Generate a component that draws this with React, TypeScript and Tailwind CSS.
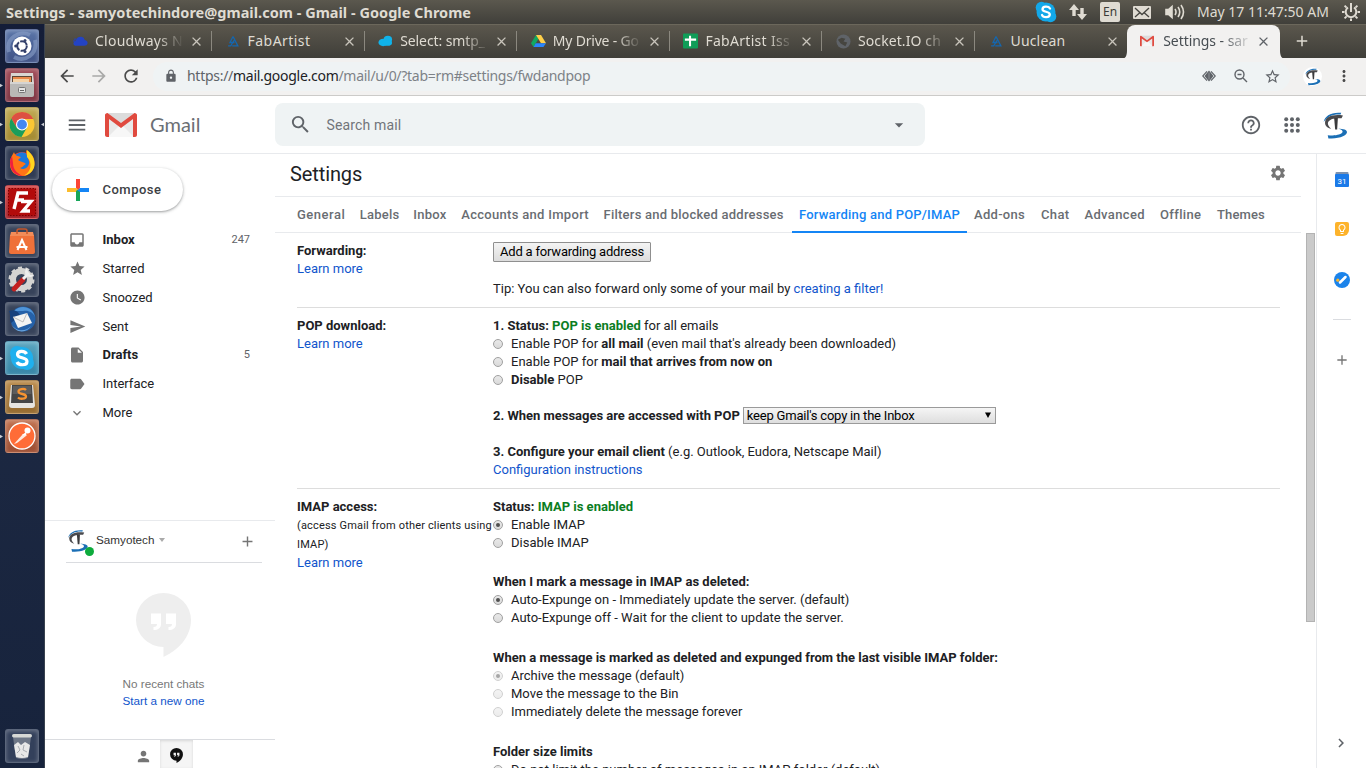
import type { ReactNode } from "react";
import {
  MdMenu, MdSearch, MdArrowDropDown, MdHelpOutline, MdInbox, MdStar, MdWatchLater, MdSend,
  MdInsertDriveFile, MdLabel, MdExpandMore, MdPerson, MdSettings, MdArrowBack, MdArrowForward,
  MdRefresh, MdLock, MdStarBorder, MdMoreVert, MdAdd, MdChevronRight, MdClose, MdLightbulbOutline,
} from "react-icons/md";

/* ---------- logos ---------- */

function SamyotechLogo({ className }: { className: string }) {
  return (
    <svg viewBox="0 0 80 88" className={className} aria-hidden="true">
      <path d="M5 35C8 17 28 5 57 8L55 13C34 11 16 18 5 35Z" fill="#1b6fb5" />
      <path d="M62 16C34 11 9 19 9 37C9 47 17 53 27 55C19 48 16 42 18 36C23 25 39 23 58 24Z" fill="#4a4a4d" />
      <path d="M36 23H47L45 57H39Z" fill="#3b3b3d" />
      <path d="M48 55C63 55 75 58 74 66C71 79 45 84 19 84L17 74C38 77 57 73 61 65C62 60 57 57 48 55Z" fill="#1b6fb5" />
    </svg>
  );
}

function GmailLogo({ className }: { className: string }) {
  return (
    <svg viewBox="0 0 32 24" className={className} aria-hidden="true">
      <path d="M2 0H30V24H2Z" fill="#e9e9e9" />
      <path d="M3 24L16 11L29 24Z" fill="#f7f7f7" />
      <path d="M4 1L16 11L28 1V0H4Z" fill="#dcdcdc" />
      <path d="M0 2C0 1 1 0 2.500 0L16 10L29.500 0C31 0 32 1 32 2V22C32 23 31 24 30 24H28V6L16 15L4 6V24H2C1 24 0 23 0 22Z" fill="#e04a3f" />
    </svg>
  );
}

function HangoutsLogo({ className, quote }: { className: string; quote: string }) {
  return (
    <svg viewBox="0 0 55 64" className={className} aria-hidden="true">
      <path d="M27.500 0A27.500 27 0 0 0 27.500 54V64C43 57 55 43 55 27A27.500 27 0 0 0 27.500 0Z" fill="currentColor" />
      <path d="M15 20.500H25V31C25 35 22 37 17.500 37V34C20 34 21 33 21 31H15ZM30 20.500H40V31C40 35 37 37 32.500 37V34C35 34 36 33 36 31H30Z" fill={quote} />
    </svg>
  );
}

/* ---------- desktop panel ---------- */

function TopPanel() {
  return (
    <header className="flex h-6 shrink-0 items-center justify-between bg-linear-to-b from-[#5b584e] to-[#403f3a] px-1.5 text-[#dfdbd2]">
      <div className="text-[14.5px] leading-6 font-bold tracking-[0.02px] whitespace-nowrap">
        Settings - samyotechindore@gmail.com - Gmail - Google Chrome
      </div>
      <div className="flex items-center">
        <svg viewBox="0 0 22 22" className="mr-3 h-[22px] w-[22px]">
          <circle cx="11" cy="11" r="9.500" fill="#13a8e9" />
          <circle cx="6.500" cy="6.500" r="5.800" fill="#13a8e9" />
          <circle cx="15.500" cy="15.500" r="5.800" fill="#13a8e9" />
          <path d="M15 7.500C13.500 5 7.500 5 7.500 8.200C7.500 11.500 14.800 10 14.800 13.500C14.800 17 8 17 7 14" fill="none" stroke="#fff" strokeWidth="2.300" strokeLinecap="round" />
        </svg>
        <svg viewBox="0 0 18 16" className="mr-[13px] h-4 w-[18px]" fill="#dfdbd2">
          <path d="M5 0L10 6H6.700V12H3.300V6H0ZM13 16L8 10H11.300V4H14.700V10H18Z" />
        </svg>
        <div className="mr-[13px] flex h-5 w-5 items-center justify-center rounded-xs bg-[#dfdbd2] text-[12px] text-[#3c3b37]">En</div>
        <svg viewBox="0 0 18 13" className="mr-3.5 h-[13px] w-[18px]">
          <rect width="18" height="13" rx="1" fill="#dfdbd2" />
          <path d="M2 2L9 8.500L16 2M2 11L6.500 7M16 11L11.500 7" fill="none" stroke="#45443f" strokeWidth="1.300" />
        </svg>
        <svg viewBox="0 0 20 18" className="mr-3 h-[18px] w-5" fill="none" stroke="#dfdbd2" strokeWidth="1.600">
          <path d="M1 6.500H3.500L7 3.500V14.500L3.500 11.500H1Z" fill="#dfdbd2" />
          <path d="M10 6Q12 9 10 12M13 4Q16.500 9 13 14M16 2Q21 9 16 16" />
        </svg>
        <div className="mr-[13px] w-[132px] text-sm leading-6 whitespace-nowrap">May 17 11:47:50 AM</div>
        <svg viewBox="0 0 18 18" className="h-[18px] w-[18px]" fill="none" stroke="#dfdbd2">
          <path d="M6 4.500A5.300 5.300 0 1 0 12 4.500M9 2V9" strokeWidth="2" />
          <path d="M9 0V2M9 15.500V18M0 9H2.500M15.500 9H18M2.600 2.600L4.600 4.600M13.400 13.400L15.400 15.400M2.600 15.400L4.600 13.400M13.400 4.600L15.400 2.600" strokeWidth="2" />
        </svg>
      </div>
    </header>
  );
}

/* ---------- launcher ---------- */

function LauncherTile({ tint, arrow, active, children }: { tint: string; arrow?: boolean; active?: boolean; children: ReactNode }) {
  return (
    <div className="flex h-[34px] w-full items-center justify-between">
      <span className="w-[5px] text-[#c9ccd3]">
        {arrow && <svg viewBox="0 0 5 8" className="h-[7px] w-[3px]"><path d="M0 1L5 4L0 7Z" fill="currentColor" /></svg>}
      </span>
      <span className={`flex h-[34px] w-[34px] items-center justify-center rounded-[3px] border border-white/20 shadow-[inset_0_1px_4px_rgba(255,255,255,0.3)] ${tint}`}>
        <svg viewBox="0 0 32 32" className="h-8 w-8" aria-hidden="true">{children}</svg>
      </span>
      <span className="flex w-[5px] justify-end text-[#c9ccd3]">
        {active && <svg viewBox="0 0 5 8" className="h-[7px] w-[3px]"><path d="M5 1L0 4L5 7Z" fill="currentColor" /></svg>}
      </span>
    </div>
  );
}

function Launcher() {
  return (
    <aside className="flex w-[45px] shrink-0 flex-col justify-between border-r border-[#39424f] bg-linear-to-b from-[#141d38] via-[#1c2842] to-[#17233c] pt-[5px] pb-[5px]">
      <div className="flex flex-col gap-[5px]">
        <LauncherTile tint="bg-linear-to-b from-[#5a75a8] to-[#3f5286]">
          <path d="M3 22C-1 8 14 0 24 5M29 10C32 24 19 33 8 27" stroke="#8aa0c8" strokeWidth="4" fill="none" opacity=".6" />
          <circle cx="16" cy="16" r="9.500" fill="#fff" />
          <circle cx="16" cy="16" r="4.800" fill="none" stroke="#33406b" strokeWidth="2" strokeDasharray="8.800 1.250" />
          <circle cx="9.700" cy="16" r="1.500" fill="#33406b" />
          <circle cx="19" cy="10.500" r="1.500" fill="#33406b" />
          <circle cx="19" cy="21.500" r="1.500" fill="#33406b" />
        </LauncherTile>
        <LauncherTile arrow tint="bg-linear-to-b from-[#a04a57] to-[#7d3341]">
          <path d="M5 4H27L28 14H4Z" fill="#d9d6d2" />
          <path d="M6 7H26V14H6Z" fill="#5b4636" />
          <path d="M7 8H25V14H7Z" fill="#e8884a" />
          <path d="M7 10H23V14H7Z" fill="#f5d3a6" />
          <path d="M4 13H28V26Q28 28 26 28H6Q4 28 4 26Z" fill="#b9b8b6" />
          <path d="M4 13H28V15H4Z" fill="#d5d4d2" />
          <rect x="12.500" y="18.500" width="7" height="5" rx="1" fill="#e5e5e5" stroke="#777" />
          <path d="M14 21.500H18" stroke="#666" />
        </LauncherTile>
        <LauncherTile arrow active tint="bg-linear-to-b from-[#c0ab55] to-[#a3892f]">
          <circle cx="16" cy="16.500" r="12.500" fill="#fbc734" />
          <path d="M16 4A12.500 12.500 0 0 0 5.200 10.200L10.600 19.600L16 11H27.300A12.500 12.500 0 0 0 16 4Z" fill="#dd4f42" />
          <path d="M5.200 10.200A12.500 12.500 0 0 0 15.500 29L21 19.500L16 22A6 6 0 0 1 10.600 19.600Z" fill="#1a9d5b" />
          <circle cx="16" cy="16.500" r="6" fill="#fff" />
          <circle cx="16" cy="16.500" r="4.900" fill="#4387f2" />
        </LauncherTile>
        <LauncherTile tint="bg-[#303c54]">
          <circle cx="16" cy="17" r="12" fill="#f4402e" />
          <circle cx="16" cy="14" r="8.800" fill="#1b78dd" />
          <path d="M8 5C9 9 12 9 15 10L12 13C15 15 18 15 20 17C17 18 18 20 14 21C19 24 24 19 23 14C22 10 20 9 20 3C25 6 29 10 28.500 17C28 25 22 29 16 29C9 29 4 24 4 17C4 11 6 9 8 5Z" fill="#ff7417" />
          <path d="M21 3C25 6 29 11 28.500 18C28 24 23 28 18 28.500C25 25 27 16 21 10Z" fill="#ffd51f" />
          <path d="M4 15C4 24 10 29 17 29C12 27 7 23 7 16L6 9Q4 12 4 15Z" fill="#f0203f" />
        </LauncherTile>
        <LauncherTile arrow tint="bg-linear-to-b from-[#d13c3c] to-[#a01620]">
          <rect x="2.500" y="2.500" width="27" height="27" fill="#b20b0b" stroke="#7a0000" strokeDasharray="1.500 1.500" />
          <path d="M8 23L12 7H22M10.500 14H18M15 15.500H25L17 25H24" fill="none" stroke="#fff" strokeWidth="3.400" />
        </LauncherTile>
        <LauncherTile tint="bg-[#37435a]">
          <path d="M4 10H28L29 27Q29 29 27 29H5Q3 29 3 27Z" fill="#ef7139" />
          <path d="M5 7H27L28 11H4Z" fill="#f28c58" />
          <path d="M11 9V6Q11 4 13 4H19Q21 4 21 6V9" fill="none" stroke="#c5552a" strokeWidth="1.500" />
          <path d="M11.500 25L16 15L20.500 25M10.500 22H21.500" fill="none" stroke="#fff" strokeWidth="2" />
        </LauncherTile>
        <LauncherTile tint="bg-[#37435a]">
          <circle cx="15.500" cy="15.500" r="8.500" fill="none" stroke="#d4d4d2" strokeWidth="6" />
          <circle cx="15.500" cy="15.500" r="11.800" fill="none" stroke="#d4d4d2" strokeWidth="2.400" strokeDasharray="4 3.400" />
          <path d="M8 25L17 15.500" stroke="#c3201f" strokeWidth="4.800" strokeLinecap="round" />
          <path d="M17 15L23 9" stroke="#f0f0f0" strokeWidth="3" />
          <path d="M21 4A5 5 0 1 0 28 11L24 11L22 8Z" fill="#ededed" />
        </LauncherTile>
        <LauncherTile tint="bg-[#37435a]">
          <circle cx="17" cy="16" r="12.500" fill="#2561a8" />
          <path d="M8 8C14 1 27 3 29 14C27 9 22 7 17 8Z" fill="#4f94d8" />
          <path d="M3 8C9 6 13 9 14 13L5 20C3 16 5 12 3 8Z" fill="#17417c" />
          <path d="M7 14L21 10L26 20L12 25Z" fill="#f4f4f2" />
          <path d="M7 14L17 19L21 10" fill="none" stroke="#bdbdbd" />
          <path d="M5 21C10 29 20 29 25 23C21 30 10 31 5 21Z" fill="#6aa7e0" />
        </LauncherTile>
        <LauncherTile arrow tint="bg-linear-to-b from-[#5aa5bf] to-[#3585a6]">
          <circle cx="16" cy="16" r="11" fill="#1fb0ee" />
          <circle cx="11" cy="11" r="7" fill="#1fb0ee" />
          <circle cx="21" cy="21" r="7" fill="#1fb0ee" />
          <path d="M20.500 12C19 8.500 11.500 8.500 11.500 12.500C11.500 17 21 14.500 21 19.500C21 24 12.500 23.500 11 20" fill="none" stroke="#fff" strokeWidth="3.200" />
        </LauncherTile>
        <LauncherTile arrow tint="bg-linear-to-b from-[#b98a4a] to-[#94692d]">
          <path d="M5 4H27L29 24Q29 27 26 27H6Q3 27 3 24Z" fill="#e6e4e0" />
          <path d="M6 4H26L27 22H5Z" fill="#454545" />
          <path d="M7 5H25L25.500 13H6.500Z" fill="#5c5c5c" />
          <path d="M20 9C18 7 12.500 8 12.500 10.500C12.500 14 20 12 20 15.500C20 18 14 18.500 12 16.500" fill="none" stroke="#f59331" strokeWidth="2.300" />
        </LauncherTile>
        <LauncherTile arrow tint="bg-linear-to-b from-[#c0714f] to-[#9c4d31]">
          <circle cx="16" cy="16" r="13" fill="#ff6c37" stroke="#fff" strokeWidth="1.300" />
          <path d="M8 24L17 14L20 16L11 23Z" fill="#ffe9df" />
          <circle cx="21.500" cy="10.500" r="3" fill="#fff" />
          <path d="M16 15L20 12L20.500 16Z" fill="#fff" />
        </LauncherTile>
      </div>
      <LauncherTile tint="bg-[#33405b]">
        <path d="M7 7H25L22 28Q16 30 10 28Z" fill="#8f959f" opacity=".65" />
        <path d="M8 15L12 12L15 15L19 12L24 15L22 27Q16 29 10 27Z" fill="#e8e8e8" />
        <path d="M12 16L14 20L11 23M18 15L17 20L21 22M15 24L18 26" fill="none" stroke="#a9adb2" />
        <rect x="6" y="4" width="20" height="3.500" rx="1.700" fill="#d7d9d6" />
      </LauncherTile>
    </aside>
  );
}

/* ---------- browser chrome ---------- */

const fabIcon = (
  <svg viewBox="0 0 16 16" className="h-3 w-3.5" fill="none" stroke="#1467b0" strokeWidth="1.700">
    <path d="M1.500 14.500H5L9.500 7M8 2L14.500 14.500H7M8 2L4 10H10" />
  </svg>
);

const browserTabs: { title: string; size: string; icon: ReactNode }[] = [
  {
    title: "Cloudways N",
    size: "tracking-[0.25px] mask-r-from-70%",
    icon: (
      <svg viewBox="0 0 16 16" className="h-4 w-4">
        <path d="M4 13Q0 13 .5 10Q1 8 3 8Q4 3 9 3.500Q12 4 12.500 7Q16 7.500 15.500 11Q15 13 12 13Z" fill="#2343c4" />
        <path d="M1 6H4M0 8H3" stroke="#2343c4" />
      </svg>
    ),
  },
  { title: "FabArtist", size: "tracking-[0.45px]", icon: fabIcon },
  {
    title: "Select: smtp_",
    size: "tracking-[-0.1px] mask-r-from-70%",
    icon: (
      <svg viewBox="0 0 16 16" className="h-4 w-4" fill="#10b3ea">
        <ellipse cx="5.500" cy="9.500" rx="5" ry="4" />
        <ellipse cx="10.500" cy="6.500" rx="4.500" ry="4" />
        <ellipse cx="10" cy="10" rx="5" ry="3" />
      </svg>
    ),
  },
  {
    title: "My Drive - Go",
    size: "tracking-[-0.2px] mask-r-from-70%",
    icon: (
      <svg viewBox="0 0 16 16" className="h-4 w-4">
        <path d="M5.300 1.500L0 10.500L2.700 14.500L8 5.500Z" fill="#11a861" />
        <path d="M5.300 1.500H10.700L16 10.500H10.700Z" fill="#ffcf48" />
        <path d="M5 10.500H16L13.300 14.500H2.700Z" fill="#2a85fc" />
      </svg>
    ),
  },
  {
    title: "FabArtist Iss",
    size: "tracking-[0.3px] mask-r-from-70%",
    icon: (
      <svg viewBox="0 0 16 16" className="h-4 w-4">
        <rect width="16" height="16" rx="1" fill="#0f9d58" />
        <path d="M2 6.500H14M7.500 2.500V13.500" stroke="#fff" strokeWidth="2.200" />
      </svg>
    ),
  },
  {
    title: "Socket.IO ch",
    size: "tracking-[0.1px] mask-r-from-70%",
    icon: (
      <svg viewBox="0 0 16 16" className="h-[15px] w-[15px]">
        <circle cx="8" cy="8" r="7.500" fill="#5f6368" />
        <path d="M2 6L6 4L10 5L8 8L12 9L10 13L5 10Z" fill="#46453f" />
      </svg>
    ),
  },
  { title: "Uuclean", size: "tracking-[0.15px]", icon: fabIcon },
];

function BrowserTabs() {
  return (
    <div className="flex h-[34px] shrink-0 overflow-hidden border-t border-[#6b675b] bg-linear-to-b from-[#5b574d] to-[#3f3e39] pl-[15px]">
      {browserTabs.map((tab, i) => (
        <div key={tab.title} className="flex h-8 w-[152.6px] shrink-0 items-center pl-[13px]">
          <span className="flex w-[15px] shrink-0 justify-center">{tab.icon}</span>
          <span className={`ml-[7px] w-[89px] shrink-0 text-sm leading-8 whitespace-nowrap text-[#dfdbd2] ${tab.size}`}>{tab.title}</span>
          <MdClose className="ml-[5px] h-[15px] w-[15px] shrink-0 text-[#c9c5bc]" />
          {i < 6 && <span className="ml-[7px] h-5 w-px shrink-0 bg-[#8b887f]" />}
        </div>
      ))}
      <div className="-ml-[7px] flex h-[34px] w-[165px] shrink-0 items-stretch">
        <svg viewBox="0 0 6 34" className="h-[34px] w-1.5 shrink-0"><path d="M6 26Q6 34 0 34H6Z" fill="#f2f1f0" /></svg>
        <div className="flex w-[153px] items-center rounded-t-lg bg-[#f2f1f0] pb-0.5 pl-3">
          <GmailLogo className="ml-px h-3 w-3.5 shrink-0" />
          <span className="ml-[9px] w-[90px] shrink-0 mask-r-from-65% text-sm leading-8 tracking-[-0.05px] whitespace-nowrap text-[#474d52]">Settings - sar</span>
          <MdClose className="ml-[3px] h-[15px] w-[15px] shrink-0 text-[#5f6368]" />
        </div>
        <svg viewBox="0 0 6 34" className="h-[34px] w-1.5 shrink-0"><path d="M0 26Q0 34 6 34H0Z" fill="#f2f1f0" /></svg>
      </div>
      <MdAdd className="mt-[7px] ml-[7px] h-[18px] w-[18px] shrink-0 text-[#dfdbd2]" />
    </div>
  );
}

function Toolbar() {
  return (
    <div className="flex h-[38px] shrink-0 items-center border-b border-[#cccbc9] bg-[#f2f1f0] pb-px pl-3 text-[#4b4b4b]">
      <MdArrowBack className="h-5 w-5" />
      <MdArrowForward className="ml-3 h-5 w-5 text-[#a9a9a8]" />
      <MdRefresh className="ml-3 h-5 w-5" />
      <div className="ml-3 flex h-[29px] w-[1137px] items-center rounded-full bg-[#eff3f4] pr-[9px] pl-[11px] text-[#5f6368]">
        <MdLock className="h-3.5 w-3.5" />
        <div className="ml-[9px] flex-1 text-sm tracking-[-0.28px] whitespace-nowrap text-[#7d8287]">
          <span className="text-[#5f6368]">https://</span>
          <span className="text-[#202124]">mail.google.com</span>/mail/u/0/?tab=rm#settings/fwdandpop
        </div>
        <svg viewBox="0 0 14 12" className="h-3 w-3.5">
          <path d="M5 1.300L0.700 6L5 10.700M9 1.300L13.300 6L9 10.700" fill="none" stroke="currentColor" strokeWidth="1.200" />
          <path d="M7 0.500L11.500 6L7 11.500L2.500 6Z" fill="currentColor" />
          <path d="M7 2.500V9.500" stroke="#9aa0a3" strokeWidth="0.800" />
        </svg>
        <svg viewBox="0 0 14 14" className="ml-[18px] h-3.5 w-3.5" fill="none" stroke="currentColor" strokeWidth="1.400">
          <circle cx="5.500" cy="5.500" r="4.500" />
          <path d="M3.500 5.500H7.500M9 9L13 13" />
        </svg>
        <MdStarBorder className="ml-4 h-[17px] w-[17px]" />
      </div>
      <div className="ml-[13px] flex h-[19px] w-[19px] items-center justify-center rounded-full bg-white">
        <SamyotechLogo className="h-[19px] w-[18px]" />
      </div>
      <MdMoreVert className="ml-[13px] h-[18px] w-[18px]" />
    </div>
  );
}

/* ---------- Gmail ---------- */

function GmailHeader() {
  return (
    <div className="flex h-[58px] shrink-0 items-center border-b border-[#e8eaed] text-[#5f6368]">
      <MdMenu className="ml-[21px] h-[22px] w-[22px]" />
      <GmailLogo className="ml-[17px] h-6 w-8" />
      <div className="ml-[13px] w-[125px] pb-0.5 font-['Lato',sans-serif] text-[20px] text-[#6b6f74]">Gmail</div>
      <div className="flex h-[43px] w-[650px] items-center rounded-lg bg-[#eff3f4] pl-3.5">
        <MdSearch className="h-[23px] w-[23px]" />
        <div className="ml-[14.5px] flex-1 font-['Roboto',sans-serif] text-sm tracking-[0.15px] text-[#71757a]">Search mail</div>
        <MdArrowDropDown className="mr-4 h-5 w-5" />
      </div>
      <MdHelpOutline className="ml-[315px] h-[22px] w-[22px]" />
      <svg viewBox="0 0 16 16" className="ml-[22px] h-4 w-4" fill="currentColor">
        {[2.2, 8, 13.8].map((y) => [2.2, 8, 13.8].map((x) => <circle key={`${x}-${y}`} cx={x} cy={y} r="2" />))}
      </svg>
      <SamyotechLogo className="ml-[22px] h-[30px] w-[27px]" />
    </div>
  );
}

const folders: { name: string; icon: ReactNode; count?: string; bold?: boolean }[] = [
  { name: "Inbox", icon: <MdInbox className="h-[18px] w-[18px]" />, count: "247", bold: true },
  { name: "Starred", icon: <MdStar className="h-[17px] w-[17px]" /> },
  { name: "Snoozed", icon: <MdWatchLater className="h-[17px] w-[17px]" /> },
  { name: "Sent", icon: <MdSend className="h-[17px] w-[17px]" /> },
  { name: "Drafts", icon: <MdInsertDriveFile className="h-[18px] w-[18px]" />, count: "5", bold: true },
  { name: "Interface", icon: <MdLabel className="h-[18px] w-[18px]" /> },
  { name: "More", icon: <MdExpandMore className="h-4 w-4" /> },
];

function Sidebar() {
  return (
    <nav className="flex w-[230px] shrink-0 flex-col">
      <div className="mt-3.5 ml-[7px] flex h-[43px] w-[131px] shrink-0 items-center rounded-full bg-white pl-[14.5px] shadow-[0_1px_2px_0_rgba(60,64,67,0.35),0_1px_3px_1px_rgba(60,64,67,0.14)]">
        <svg viewBox="0 0 22 22" className="h-[22px] w-[22px]">
          <path d="M9 0H13V9L11 12L9 9Z" fill="#fb4536" />
          <path d="M0 9H9L12 11L9 13H0Z" fill="#fbbc2c" />
          <path d="M9 12L11 10.500L13 12V22H9Z" fill="#17a65a" />
          <path d="M22 9H13L10.500 11.500L13 13H22Z" fill="#1485f5" />
        </svg>
        <span className="ml-3.5 text-[13px] font-medium tracking-[0.5px] text-[#3c4043]">Compose</span>
      </div>
      <div className="mt-[14.5px] flex flex-col">
        {folders.map((f) => (
          <div key={f.name} className="flex h-[28.8px] items-center pl-[23px] text-[13px] text-[#202124]">
            <span className="flex w-[18px] justify-center text-[#757575]">{f.icon}</span>
            <span className={f.bold ? "ml-[16.5px] flex-1 font-bold" : "ml-[16.5px] flex-1"}>{f.name}</span>
            <span className="mr-[25px] text-[11px] text-[#5f6368]">{f.count}</span>
          </div>
        ))}
      </div>
      <div className="mt-auto flex h-[248px] shrink-0 flex-col border-t border-[#e8eaed] font-['Liberation_Sans',sans-serif]">
        <div className="ml-[21px] flex h-[42px] w-[196px] shrink-0 items-center border-b border-[#dadce0] pb-[3px]">
          <div className="relative">
            <SamyotechLogo className="h-[25px] w-[24px]" />
            <span className="absolute -right-1 -bottom-[3px] h-[9px] w-[9px] rounded-full bg-[#0dab3c]" />
          </div>
          <span className="ml-1.5 text-[11.700px] text-[#333]">Samyotech</span>
          <svg viewBox="0 0 6 4" className="ml-[5px] h-1 w-1.5"><path d="M0 0H6L3 4Z" fill="#aaa" /></svg>
          <MdAdd className="mt-0.5 mr-1.5 ml-auto h-[17px] w-[17px] text-[#757575]" />
        </div>
        <HangoutsLogo className="mt-[30px] ml-[91px] h-16 w-[55px] shrink-0 text-[#eeeeee]" quote="#fff" />
        <div className="mt-[18px] ml-[7px] text-center text-[11.700px] leading-[17px]">
          <div className="text-[#777]">No recent chats</div>
          <div className="text-[#1155cc]">Start a new one</div>
        </div>
        <div className="mt-auto flex h-[29px] shrink-0 items-stretch border-t border-[#dadce0] pl-[82px]">
          <div className="flex w-[33px] items-center justify-center pt-1"><MdPerson className="h-[17px] w-[17px] text-[#757575]" /></div>
          <div className="flex w-[33px] items-center justify-center bg-[#f5f5f5] pt-0.5 shadow-[inset_0_1px_3px_rgba(0,0,0,0.12)]">
            <HangoutsLogo className="h-[15px] w-[13px] text-[#111]" quote="#f5f5f5" />
          </div>
        </div>
      </div>
    </nav>
  );
}

const settingsTabs: { name: string; size: string; active?: boolean }[] = [
  { name: "General", size: "w-[62.7px] tracking-[0.5px]" },
  { name: "Labels", size: "w-[53.6px] tracking-[0.25px]" },
  { name: "Inbox", size: "w-12 tracking-[0.25px]" },
  { name: "Accounts and Import", size: "w-[142.3px] tracking-[0.3px]" },
  { name: "Filters and blocked addresses", size: "w-[195.4px] tracking-[0.23px]" },
  { name: "Forwarding and POP/IMAP", size: "w-[175px] tracking-[0.21px]", active: true },
  { name: "Add-ons", size: "w-[67px] tracking-[0.3px]" },
  { name: "Chat", size: "w-[43.5px] tracking-[0.35px]" },
  { name: "Advanced", size: "w-[75.5px] tracking-[0.35px]" },
  { name: "Offline", size: "w-[57px] tracking-[0.35px]" },
  { name: "Themes", size: "w-[62px] tracking-[0.15px]" },
];

function Radio({ checked, disabled, children }: { checked?: boolean; disabled?: boolean; children: ReactNode }) {
  return (
    <div className="flex h-[18px] items-center">
      <span className={`mr-2 flex h-2.5 w-2.5 items-center justify-center rounded-full border border-[#a0a0a0] bg-linear-to-b from-[#e9e9e9] to-[#dadada] ${disabled ? "opacity-50" : ""}`}>
        {checked && <span className="h-1 w-1 rounded-full bg-[#505050]" />}
      </span>
      <span className="whitespace-nowrap">{children}</span>
    </div>
  );
}

function Learn() {
  return <div className="text-[#1155cc]">Learn more</div>;
}

function Section({ label, children, last }: { label: ReactNode; children: ReactNode; last?: boolean }) {
  return (
    <section className={`flex shrink-0 py-[9px] ${last ? "" : "border-b border-[#dddddd]"}`}>
      <div className="w-[196px] shrink-0 whitespace-nowrap">{label}</div>
      <div className="flex-1 whitespace-nowrap">{children}</div>
    </section>
  );
}

function Settings() {
  return (
    <main className="flex w-[1041px] shrink-0 flex-col overflow-hidden">
      <div className="flex h-[43px] w-[1026px] shrink-0 items-center justify-between border-b border-[#e8eaed] pr-3.5 pl-[15px]">
        <h1 className="pb-0.5 text-[20px] tracking-[-0.1px] text-[#202124]">Settings</h1>
        <MdSettings className="mb-1 h-[18px] w-[18px] text-[#757575]" />
      </div>
      <div className="flex h-9 w-[1026px] shrink-0 border-b border-[#e8eaed] pl-[15px] text-[13px] font-medium">
        {settingsTabs.map((t) => (
          <div
            key={t.name}
            className={`shrink-0 pl-[7px] leading-[35px] whitespace-nowrap ${t.size} ${t.active ? "h-9 border-b-2 border-[#1485f5] text-[#1485f5]" : "text-[#696d72]"}`}
          >
            {t.name}
          </div>
        ))}
      </div>
      <div className="flex min-h-0 flex-1 justify-between overflow-hidden">
        <div className="ml-[22px] flex w-[983px] flex-col text-[13px] leading-[18px] text-[#202124]">
          <Section label={<><b>Forwarding:</b><Learn /></>}>
            <div className="flex h-5 w-[158px] items-center justify-center rounded-[1px] border border-[#8f8f8f] bg-linear-to-b from-[#f4f4f4] to-[#dcdcdc] tracking-[-0.2px] text-black">
              Add a forwarding address
            </div>
            <div className="mt-[18px]">
              Tip: You can also forward only some of your mail by <span className="text-[#1155cc]">creating a filter!</span>
            </div>
          </Section>
          <Section label={<><b>POP download:</b><Learn /></>}>
            <div><b>1. Status: <span className="text-[#0b7d1f]">POP is enabled</span></b> for all emails</div>
            <Radio>Enable POP for <b>all mail</b> (even mail that's already been downloaded)</Radio>
            <Radio>Enable POP for <b>mail that arrives from now on</b></Radio>
            <Radio><b>Disable</b> POP</Radio>
            <div className="mt-[18px] flex h-[18px]">
              <b className="tracking-[-0.02px]">2. When messages are accessed with POP</b>
              <div className="ml-[3px] flex h-[17px] w-[253px] items-center justify-between border border-[#9a9a9a] bg-linear-to-b from-[#f5f5f5] to-[#dedede] pr-1 pl-[3px] tracking-[-0.2px] text-black">
                keep Gmail's copy in the Inbox
                <svg viewBox="0 0 7 7" className="mb-px h-1.5 w-1.5"><path d="M0 0.500H7L3.500 7Z" /></svg>
              </div>
            </div>
            <div className="mt-[18px]"><b>3. Configure your email client</b> (e.g. Outlook, Eudora, Netscape Mail)</div>
            <div className="text-[#1155cc]">Configuration instructions</div>
          </Section>
          <Section
            last
            label={
              <>
                <b>IMAP access:</b>
                <div className="text-[11px] leading-[19px] tracking-[0.17px]">(access Gmail from other clients using<br />IMAP)</div>
                <Learn />
              </>
            }
          >
            <b>Status: <span className="text-[#0b7d1f]">IMAP is enabled</span></b>
            <Radio checked>Enable IMAP</Radio>
            <Radio>Disable IMAP</Radio>
            <div className="mt-[21px] font-bold">When I mark a message in IMAP as deleted:</div>
            <Radio checked>Auto-Expunge on - Immediately update the server. (default)</Radio>
            <Radio>Auto-Expunge off - Wait for the client to update the server.</Radio>
            <div className="mt-[22px] font-bold">When a message is marked as deleted and expunged from the last visible IMAP folder:</div>
            <Radio checked disabled>Archive the message (default)</Radio>
            <Radio disabled>Move the message to the Bin</Radio>
            <Radio disabled>Immediately delete the message forever</Radio>
            <div className="mt-[22px] font-bold">Folder size limits</div>
            <Radio checked>Do not limit the number of messages in an IMAP folder (default)</Radio>
          </Section>
        </div>
        <div className="mr-px h-[389px] w-[9px] border border-[#b3b3b3] bg-[#cacaca]" />
      </div>
    </main>
  );
}

function SidePanel() {
  return (
    <aside className="flex flex-1 flex-col items-center border-l border-[#e8eaed]">
      <svg viewBox="0 0 14 15" className="mt-[18px] h-[15px] w-3.5 shrink-0">
        <rect x="0.500" width="13" height="4" rx="1" fill="#7d91ad" />
        <rect y="2" width="14" height="13" rx="1" fill="#1b7ae8" />
        <text x="7" y="11.500" fontSize="8" textAnchor="middle" fill="#fff">31</text>
      </svg>
      <div className="mt-[35px] flex h-3.5 w-3.5 shrink-0 items-center justify-center rounded-xs rounded-br-md bg-[#fdb32b]">
        <MdLightbulbOutline className="h-3 w-3 text-white" />
      </div>
      <svg viewBox="0 0 16 16" className="mt-9 h-4 w-4 shrink-0">
        <circle cx="8" cy="8" r="8" fill="#1b83ea" />
        <circle cx="3.800" cy="8.200" r="1.600" fill="#f6b42c" />
        <path d="M6 10.500L11.500 5" stroke="#fff" strokeWidth="2.500" strokeLinecap="round" />
      </svg>
      <div className="mt-[31px] h-px w-[18px] shrink-0 bg-[#dadce0]" />
      <MdAdd className="mt-8 h-4 w-4 shrink-0 text-[#757575]" />
      <MdChevronRight className="mt-auto mr-0.5 mb-4 h-[18px] w-[18px] text-[#5f6368]" />
    </aside>
  );
}

export default function App() {
  return (
    <div className="flex h-[768px] w-[1366px] flex-col overflow-hidden bg-white font-['Noto_Sans',sans-serif]">
      <TopPanel />
      <div className="flex min-h-0 flex-1">
        <Launcher />
        <div className="flex min-w-0 flex-1 flex-col">
          <BrowserTabs />
          <Toolbar />
          <div className="flex min-h-0 flex-1 flex-col font-['Roboto',sans-serif]">
            <GmailHeader />
            <div className="flex min-h-0 flex-1">
              <Sidebar />
              <Settings />
              <SidePanel />
            </div>
          </div>
        </div>
      </div>
    </div>
  );
}
